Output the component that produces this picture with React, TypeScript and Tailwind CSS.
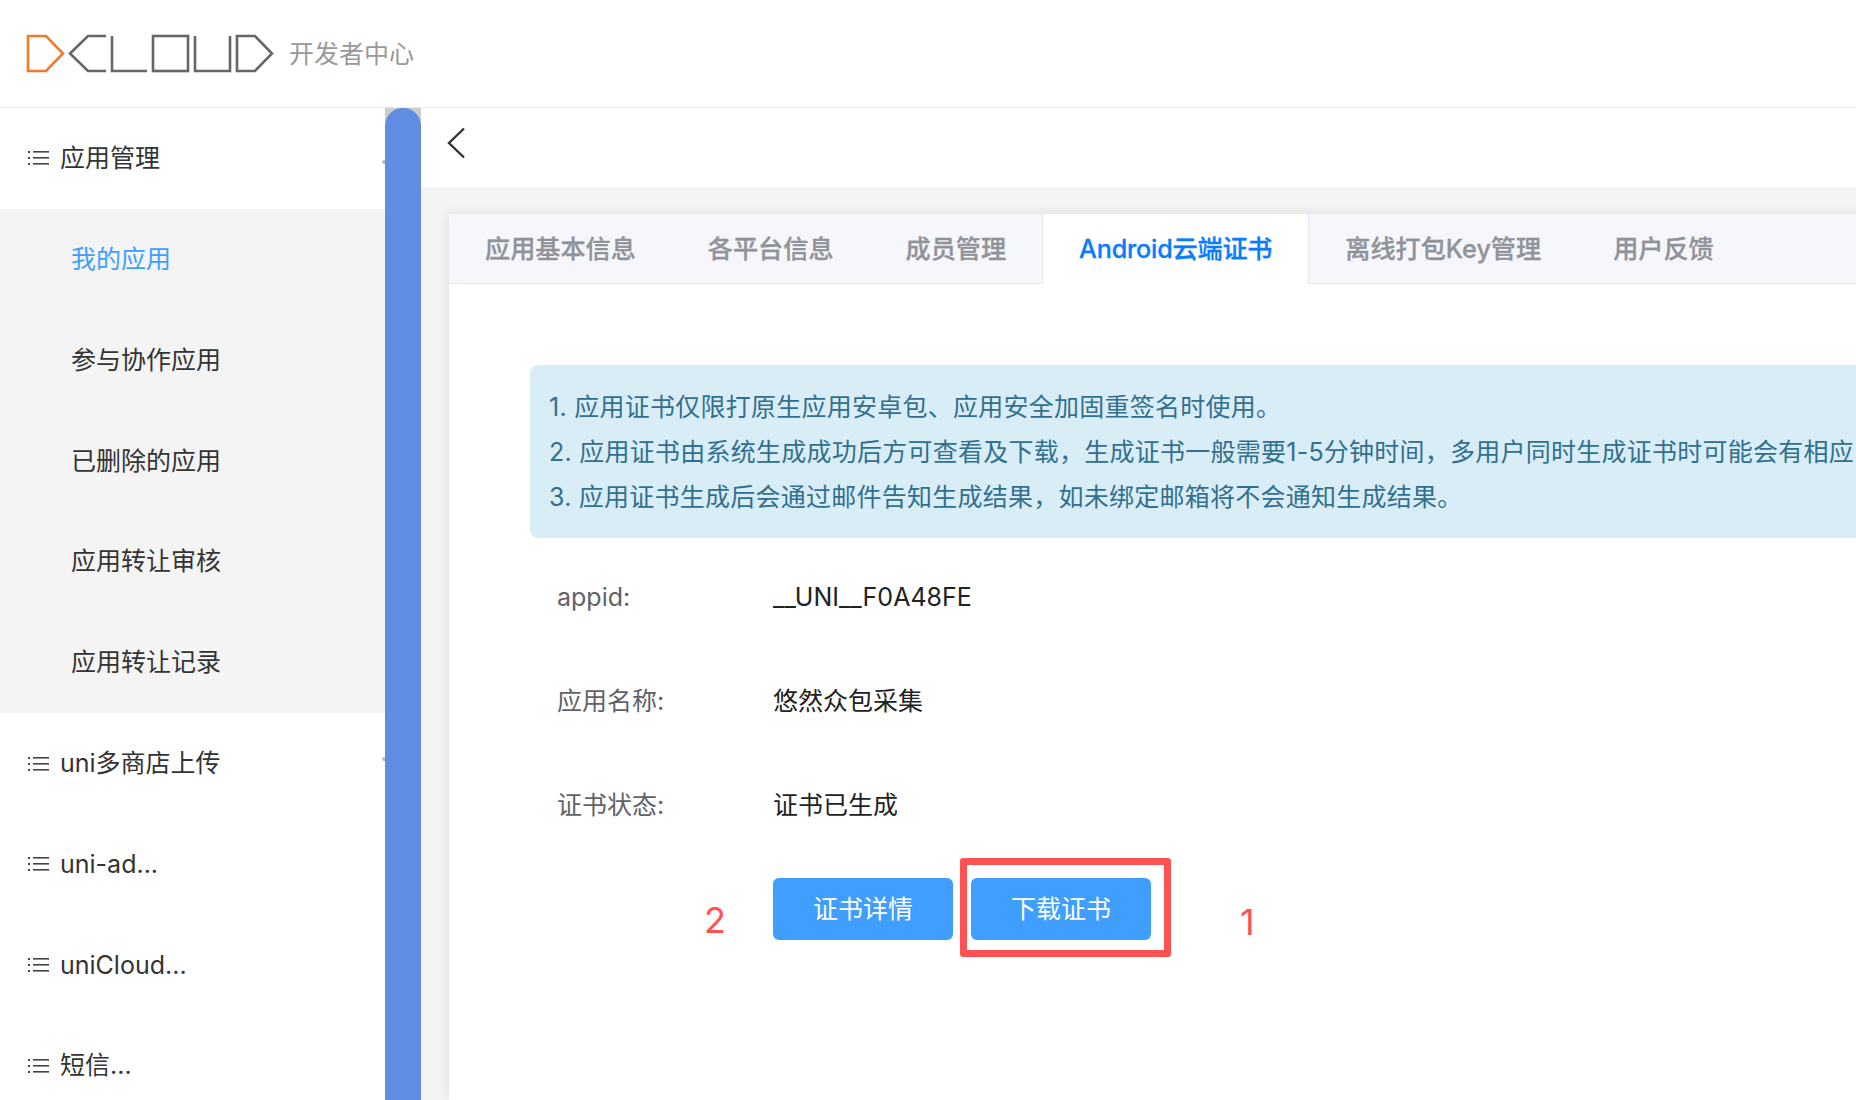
const FONT = '[font-family:Inter,"Noto_Sans_CJK_SC",sans-serif]';

const subItems = ['我的应用', '参与协作应用', '已删除的应用', '应用转让审核', '应用转让记录'];
const bottomItems = ['uni多商店上传', 'uni-ad...', 'uniCloud...', '短信...'];
const tabs = ['应用基本信息', '各平台信息', '成员管理', 'Android云端证书', '离线打包Key管理', '用户反馈'];
const notices = [
  '1. 应用证书仅限打原生应用安卓包、应用安全加固重签名时使用。',
  '2. 应用证书由系统生成成功后方可查看及下载，生成证书一般需要1-5分钟时间，多用户同时生成证书时可能会有相应',
  '3. 应用证书生成后会通过邮件告知生成结果，如未绑定邮箱将不会通知生成结果。',
];
const fields = [
  ['appid:', '__UNI__F0A48FE'],
  ['应用名称:', '悠然众包采集'],
  ['证书状态:', '证书已生成'],
];

const ListIcon = () => (
  <svg width="21" height="16" viewBox="0 0 21 16" className="shrink-0 text-[#444]">
    <g fill="currentColor">
      <rect x="0" y="1" width="2" height="2" />
      <rect x="0" y="7" width="2" height="2" />
      <rect x="0" y="13" width="2" height="2" />
      <rect x="5" y="1" width="16" height="1.6" />
      <rect x="5" y="7" width="16" height="1.6" />
      <rect x="5" y="13" width="16" height="1.6" />
    </g>
  </svg>
);

const Logo = () => (
  <svg width="250" height="40" viewBox="26 34 250 40" fill="none" strokeWidth="2.6">
    <path d="M28 36H46L63 53.5L46 71H28Z" stroke="#f5782a" />
    <g stroke="#666">
      <path d="M106 36H88L70 53.5L88 71H106" />
      <path d="M112 36V71H147" />
      <rect x="153" y="36" width="35" height="35" />
      <path d="M195 36V71H230V36" />
      <path d="M237 36V71H255L272 53.5L255 36Z" />
    </g>
  </svg>
);

const Sidebar = () => (
  <aside className="flex w-[421px] shrink-0">
    <nav className="w-[385px] text-[25px] text-[#333]">
      <div className="relative flex h-[100.8px] items-center gap-[11px] pl-[28px]">
        <ListIcon />
        <span>应用管理</span>
        <i className="absolute right-0 top-[52px] h-[4px] w-[3px] rounded-l-sm bg-[#bbb]" />
      </div>
      <div className="bg-[#f4f4f4]">
        {subItems.map((item, i) => (
          <div
            key={item}
            className={`flex h-[100.8px] items-center pl-[71px] pt-[1px] ${i === 0 ? 'text-[#409eff]' : ''}`}
          >
            {item}
          </div>
        ))}
      </div>
      {bottomItems.map((item, i) => (
        <div key={item} className="relative flex h-[100.8px] items-center gap-[11px] pl-[28px] pt-[1px]">
          <ListIcon />
          <span>{item}</span>
          {i === 0 && <i className="absolute right-0 top-[44px] h-[4px] w-[3px] rounded-l-sm bg-[#bbb]" />}
        </div>
      ))}
    </nav>
    <div className="w-[36px] bg-[#ccc]">
      <div className="h-full rounded-t-full bg-[#5f8de2]" />
    </div>
  </aside>
);

export default function App() {
  return (
    <div className={`relative flex h-[1100px] w-[1856px] flex-col overflow-hidden bg-white ${FONT}`}>
      <header className="flex h-[108px] shrink-0 items-center gap-[13px] border-b border-[#e8e8e8] pl-[26px]">
        <Logo />
        <span className="pt-[2px] text-[25px] text-[#999]">开发者中心</span>
      </header>
      <div className="flex min-h-0 flex-1">
        <Sidebar />
        <main className="flex min-w-0 flex-1 flex-col bg-[#f4f4f5]">
          <div className="h-[79px] shrink-0 bg-white pl-[26px] pt-[19px]">
            <svg width="18" height="32" viewBox="0 0 18 32" fill="none" stroke="#333" strokeWidth="2.4">
              <path d="M17 1.5L2 16L17 30.5" />
            </svg>
          </div>
          <div className="min-h-0 flex-1 pl-[28px] pt-[27px]">
            <section className="h-full w-[1500px] bg-white shadow-[0_0_12px_rgba(0,0,0,0.1)]">
              <div className="flex h-[70px] border-b border-[#e4e7ed] bg-[#f5f7fa] text-[25.15px] font-medium text-[#909399] [-webkit-text-stroke:0.3px]">
                {tabs.map((tab, i) => (
                  <div
                    key={tab}
                    className={`flex h-[70px] items-center px-[36px] pt-[1px] ${
                      i === 3 ? 'border-x border-[#e4e7ed] bg-white tracking-[-0.2px] text-[#0a7dfa]' : ''
                    }`}
                  >
                    {tab}
                  </div>
                ))}
              </div>
              <div className="pl-[81px] pt-[81px]">
                <div className="h-[173px] overflow-hidden whitespace-nowrap rounded-l-lg bg-[#d9edf7] pl-[19px] pt-[20px] text-[25px] leading-[45px] tracking-[0.25px] text-[#31708f]">
                  {notices.map((line) => (
                    <div key={line}>{line}</div>
                  ))}
                </div>
                <div className="pl-[27px] pt-[8px] text-[25px]">
                  {fields.map(([label, value]) => (
                    <div key={label} className="flex h-[104px] items-center">
                      <span className="w-[216px] text-[#606266]">{label}</span>
                      <span className="text-[#222]">{value}</span>
                    </div>
                  ))}
                </div>
                <div className="flex gap-[18px] pl-[243px] pt-[20px] text-[25px] text-white">
                  <button className="h-[62px] w-[180px] rounded-md bg-[#409eff] pt-[1px]">证书详情</button>
                  <button className="h-[62px] w-[180px] rounded-md bg-[#409eff] pt-[1px]">下载证书</button>
                </div>
              </div>
            </section>
          </div>
        </main>
      </div>
      <div className="absolute left-[960px] top-[858px] h-[99px] w-[211px] rounded-[3px] border-[7px] border-[#ff5252]" />
      <span className="absolute left-[704px] top-[898px] text-[36px] leading-[44px] text-[#ff5252]">2</span>
      <span className="absolute left-[1240px] top-[900px] text-[36px] leading-[44px] text-[#ff5252]">1</span>
    </div>
  );
}
